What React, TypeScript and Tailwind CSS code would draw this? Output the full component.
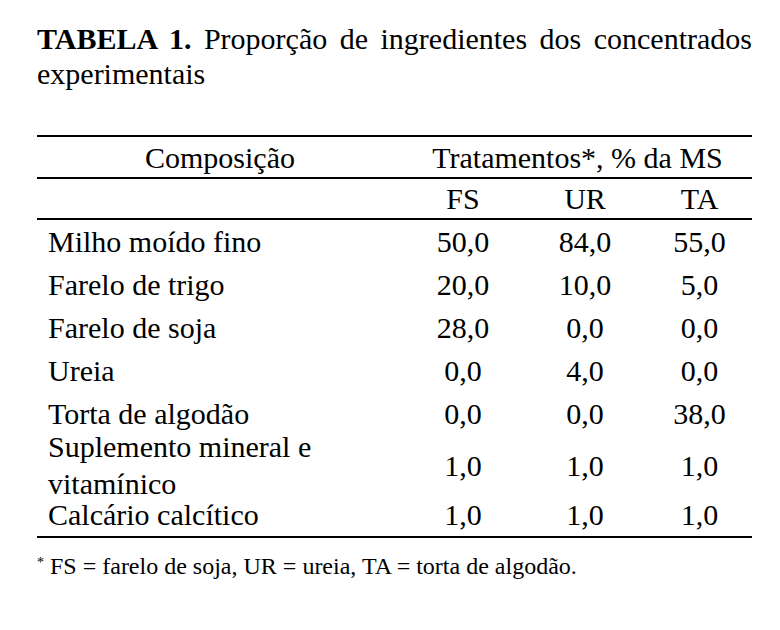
const rows: { label: string[]; fs: string; ur: string; ta: string; h: string }[] = [
  { label: ["Milho moído fino"], fs: "50,0", ur: "84,0", ta: "55,0", h: "h-[43px]" },
  { label: ["Farelo de trigo"], fs: "20,0", ur: "10,0", ta: "5,0", h: "h-[43px]" },
  { label: ["Farelo de soja"], fs: "28,0", ur: "0,0", ta: "0,0", h: "h-[43px]" },
  { label: ["Ureia"], fs: "0,0", ur: "4,0", ta: "0,0", h: "h-[43px]" },
  { label: ["Torta de algodão"], fs: "0,0", ur: "0,0", ta: "38,0", h: "h-[43px]" },
  { label: ["Suplemento mineral e", "vitamínico"], fs: "1,0", ur: "1,0", ta: "1,0", h: "h-[60px]" },
  { label: ["Calcário calcítico"], fs: "1,0", ur: "1,0", ta: "1,0", h: "h-[38px]" },
];

const cols = "grid grid-cols-[366px_120px_124px_105px] items-center";
const cell = "text-center text-[30px] leading-[33px]";

export default function App() {
  return (
    <div
      className="w-[780px] h-[630px] bg-white text-black pl-[37px] pr-[28px]"
      style={{ fontFamily: "'Liberation Serif', 'Times New Roman', serif" }}
    >
      <p className="pt-[21px] text-[30px] leading-[35px] text-justify">
        <b>TABELA 1.</b> Proporção de ingredientes dos concentrados experimentais
      </p>

      <div className="mt-[44px] border-t-2 border-b-2 border-black">
        <div className={`${cols} h-[42px] border-b-2 border-black`}>
          <div className={cell}>Composição</div>
          <div className={`${cell} col-span-3`}>Tratamentos*, % da MS</div>
        </div>
        <div className={`${cols} h-[41px] border-b-2 border-black`}>
          <div />
          <div className={cell}>FS</div>
          <div className={cell}>UR</div>
          <div className={cell}>TA</div>
        </div>
        <div className="pb-[3px]">
          {rows.map((r) => (
            <div key={r.label[0]} className={`${cols} ${r.h}`}>
              <div
                className={
                  r.label.length > 1
                    ? "pl-[11px] text-[30px] leading-[37px] -my-[7px]"
                    : "pl-[11px] text-[30px] leading-[33px]"
                }
              >
                {r.label.map((l) => (
                  <div key={l}>{l}</div>
                ))}
              </div>
              <div className={cell}>{r.fs}</div>
              <div className={cell}>{r.ur}</div>
              <div className={cell}>{r.ta}</div>
            </div>
          ))}
        </div>
      </div>

      <p className="mt-[14px] text-[24px] leading-[28px]">
        <sup className="text-[14px]">*</sup> FS = farelo de soja, UR = ureia, TA = torta de algodão.
      </p>
    </div>
  );
}
